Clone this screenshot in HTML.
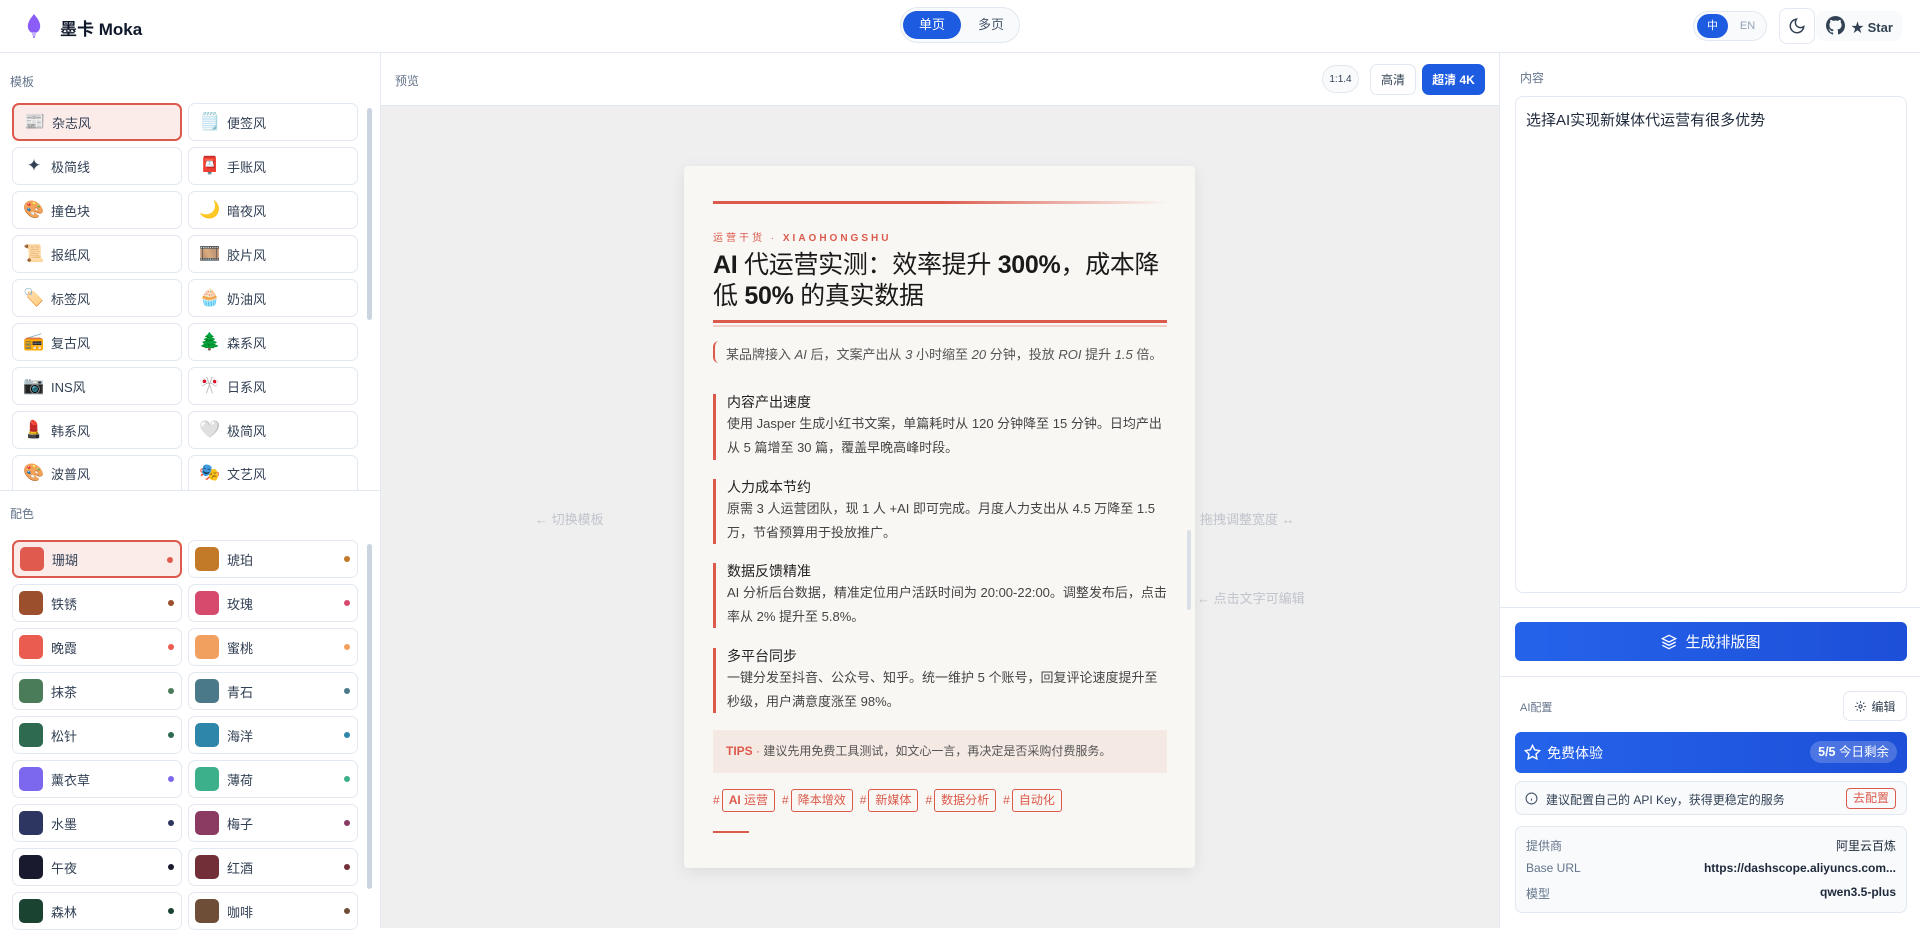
<!DOCTYPE html>
<html><head><meta charset="utf-8"><style>
*{box-sizing:border-box;margin:0;padding:0}
body{width:1920px;height:928px;overflow:hidden;font-family:"Liberation Sans","Noto Sans CJK SC",sans-serif;background:#fff;color:#1e293b;position:relative}
.abs{position:absolute}
.hdr{left:0;top:0;width:1920px;height:53px;border-bottom:1px solid #e2e8f0;background:#fff}
.left{left:0;top:53px;width:381px;height:875px;border-right:1px solid #e2e8f0;background:#fff}
.lbl{font-size:12px;color:#64748b}
.item{position:absolute;width:170px;height:38px;border:1px solid #e2e8f0;border-radius:7px;background:#fff;font-size:13px;color:#334155;display:flex;align-items:center}
.item.sel{border:2px solid #dc5a4c;background:#fbecea}
.item .ic{width:34px;text-align:center;font-size:17px;margin-left:4px}
.sw{width:24px;height:24px;border-radius:5px;margin:0 8px 0 6px}
.dot{position:absolute;right:7px;top:15px;width:6px;height:6px;border-radius:50%}
.sb{position:absolute;width:5px;border-radius:3px;background:#cbd5e1}
.prev{left:381px;top:53px;width:1118px;height:875px;background:#efefef}
.tb{left:0;top:0;width:1118px;height:53px;background:#fff;border-bottom:1px solid #e2e8f0}
.btn{position:absolute;border:1px solid #e2e8f0;border-radius:7px;font-size:12px;display:flex;align-items:center;justify-content:center;background:#fff;color:#334155}
.card{left:303px;top:113px;width:511px;height:702px;background:#f9f7f3;border-radius:4px;box-shadow:0 4px 16px rgba(0,0,0,.08)}
.sec{position:absolute;left:29px;width:454px;border-left:3px solid #dc5a4c;padding-left:11px}
.sec h4{font-weight:normal;font-size:14px;color:#222;line-height:20px;margin-top:-2px}
.sec p{font-size:13px;color:#444;line-height:24px}
.tag{display:inline-block;border:1px solid #dc5a4c;border-radius:3px;color:#dc5a4c;font-size:12px;padding:0 6px;height:23px;line-height:21px;margin-left:2px}
.hash{color:#dc5a4c;font-size:12px;margin-left:7px}
.right{left:1499px;top:53px;width:421px;height:875px;background:#fff;border-left:1px solid #e2e8f0}
</style></head><body>
<div class="abs hdr">
 <svg class="abs" style="left:24px;top:13px" width="20" height="26" viewBox="0 0 20 26"><path d="M10 1 C14 6 17 10 16 15 C15 19 12 20 10 20 C8 20 5 19 4 15 C3 10 6 6 10 1Z" fill="#8b5cf6"/><path d="M10 20 L10 25" stroke="#a78bfa" stroke-width="2"/><circle cx="10" cy="21" r="2" fill="#c4b5fd"/></svg>
 <div class="abs" style="left:60px;top:15px;font-size:17px;font-weight:bold;color:#0f172a">墨卡 Moka</div>
 <div class="abs" style="left:900px;top:7px;width:120px;height:36px;border:1px solid #e2e8f0;border-radius:18px;background:#f8fafc"></div>
 <div class="abs" style="left:903px;top:11px;width:58px;height:28px;border-radius:14px;background:#1d5be0;color:#fff;font-size:13px;text-align:center;line-height:28px">单页</div>
 <div class="abs" style="left:966px;top:11px;width:50px;height:28px;color:#475569;font-size:13px;text-align:center;line-height:28px">多页</div>
 <div class="abs" style="left:1693px;top:11px;width:74px;height:30px;border:1px solid #e2e8f0;border-radius:15px;background:#f8fafc"></div>
 <div class="abs" style="left:1697px;top:14px;width:31px;height:24px;border-radius:12px;background:#1d5be0;color:#fff;font-size:11px;text-align:center;line-height:24px">中</div>
 <div class="abs" style="left:1732px;top:14px;width:31px;height:24px;color:#94a3b8;font-size:11px;text-align:center;line-height:24px">EN</div>
 <div class="abs" style="left:1779px;top:8px;width:36px;height:36px;border:1px solid #e2e8f0;border-radius:8px"></div>
 <svg class="abs" style="left:1788px;top:17px" width="18" height="18" viewBox="0 0 24 24" fill="none" stroke="#334155" stroke-width="2"><path d="M21 12.8A9 9 0 1 1 11.2 3a7 7 0 0 0 9.8 9.8z"/></svg>
 <div class="abs" style="left:1816px;top:11px;width:86px;height:30px;border-radius:8px;background:#f8fafc"></div>
 <svg class="abs" style="left:1826px;top:16px" width="19" height="19" viewBox="0 0 16 16"><path fill="#334155" d="M8 0C3.6 0 0 3.6 0 8c0 3.5 2.3 6.5 5.5 7.6.4.1.5-.2.5-.4v-1.4c-2.2.5-2.7-1-2.7-1-.4-.9-.9-1.2-.9-1.2-.7-.5.1-.5.1-.5.8.1 1.2.8 1.2.8.7 1.2 1.9.9 2.3.7.1-.5.3-.9.5-1.1-1.8-.2-3.6-.9-3.6-4 0-.9.3-1.6.8-2.1-.1-.2-.4-1 .1-2.1 0 0 .7-.2 2.2.8.6-.2 1.3-.3 2-.3s1.4.1 2 .3c1.5-1 2.2-.8 2.2-.8.4 1.1.2 1.9.1 2.1.5.6.8 1.3.8 2.1 0 3.1-1.9 3.7-3.6 3.9.3.3.6.8.6 1.5v2.2c0 .2.1.5.6.4C13.7 14.5 16 11.5 16 8c0-4.4-3.6-8-8-8z"/></svg>
 <div class="abs" style="left:1851px;top:17px;font-size:13px;font-weight:bold;color:#334155">★ Star</div>
</div>

<div class="abs left">
 <div class="abs lbl" style="left:10px;top:20px">模板</div>
 <div class="abs" style="left:0;top:437px;width:381px;height:1px;background:#e2e8f0"></div>
 <div class="abs lbl" style="left:10px;top:452px">配色</div>
 <div class="sb" style="left:367px;top:55px;height:212px"></div>
 <div class="sb" style="left:367px;top:491px;height:345px"></div>
 <div id="tpl"></div><div id="col"></div>
</div>

<div class="abs prev">
 <div class="abs tb">
  <div class="abs lbl" style="left:14px;top:19px">预览</div>
  <div class="btn" style="left:941px;top:12px;width:37px;height:28px;border-radius:14px;font-size:10px;background:#f8fafc">1:1.4</div>
  <div class="btn" style="left:989px;top:11px;width:46px;height:31px">高清</div>
  <div class="btn" style="left:1041px;top:11px;width:63px;height:31px;background:#1d5be0;color:#fff;border-color:#1d5be0;font-weight:bold">超清 4K</div>
 </div>
 <div class="abs" style="left:154px;top:456px;font-size:13px;color:#c0c4cc">← 切换模板</div>
 <div class="abs" style="left:819px;top:456px;font-size:13px;color:#c0c4cc">拖拽调整宽度 ↔</div>
 <div class="abs" style="left:816px;top:535px;font-size:13px;color:#c0c4cc">← 点击文字可编辑</div>
 <div class="abs card">
  <div class="abs" style="left:29px;top:35px;width:454px;height:3px;background:linear-gradient(90deg,#dc5a4c 50%,rgba(220,90,76,0))"></div>
  <div class="abs" style="left:29px;top:63px;font-size:10px;letter-spacing:3px;color:#dc5a4c">运营干货 · <b>XIAOHONGSHU</b></div>
  <div class="abs" style="left:29px;top:84px;width:470px;font-size:25px;letter-spacing:-0.3px;line-height:31px;color:#1a1a1a"><b>AI</b> 代运营实测：效率提升 <b>300%</b>，成本降低 <b>50%</b> 的真实数据</div>
  <div class="abs" style="left:29px;top:154px;width:454px;height:3px;background:#dc5a4c"></div>
  <div class="abs" style="left:29px;top:159px;width:454px;height:2px;background:#f1cfc9"></div>
  <div class="abs" style="left:29px;top:175px;width:6px;height:22px;border-left:2px solid #dc5a4c;border-radius:6px 0 0 6px"></div>
  <div class="abs" style="left:42px;top:178px;font-size:13px;color:#555;white-space:nowrap">某品牌接入 <i>AI</i> 后，文案产出从 <i>3</i> 小时缩至 <i>20</i> 分钟，投放 <i>ROI</i> 提升 <i>1.5</i> 倍。</div>
  <div class="sec" style="top:228px;height:66px"><h4>内容产出速度</h4><p>使用 Jasper 生成小红书文案，单篇耗时从 120 分钟降至 15 分钟。日均产出从 5 篇增至 30 篇，覆盖早晚高峰时段。</p></div>
  <div class="sec" style="top:313px;height:65px"><h4>人力成本节约</h4><p>原需 3 人运营团队，现 1 人 +AI 即可完成。月度人力支出从 4.5 万降至 1.5 万，节省预算用于投放推广。</p></div>
  <div class="sec" style="top:397px;height:65px"><h4>数据反馈精准</h4><p>AI 分析后台数据，精准定位用户活跃时间为 20:00-22:00。调整发布后，点击率从 2% 提升至 5.8%。</p></div>
  <div class="sec" style="top:482px;height:65px"><h4>多平台同步</h4><p>一键分发至抖音、公众号、知乎。统一维护 5 个账号，回复评论速度提升至秒级，用户满意度涨至 98%。</p></div>
  <div class="abs" style="left:29px;top:564px;width:454px;height:43px;background:#f5e9e4;font-size:12px;color:#555;line-height:43px;padding-left:13px"><b style="color:#dc5a4c">TIPS</b><span style="color:#dc5a4c"> · </span>建议先用免费工具测试，如文心一言，再决定是否采购付费服务。</div>
  <div class="abs" style="left:22px;top:623px;white-space:nowrap"><span class="hash">#</span><span class="tag"><b>AI</b> 运营</span><span class="hash">#</span><span class="tag">降本增效</span><span class="hash">#</span><span class="tag">新媒体</span><span class="hash">#</span><span class="tag">数据分析</span><span class="hash">#</span><span class="tag">自动化</span></div>
  <div class="abs" style="left:29px;top:665px;width:36px;height:2px;background:#dc5a4c"></div>
  <div class="abs" style="left:503px;top:364px;width:4px;height:80px;border-radius:2px;background:#dbe0e8"></div>
 </div>
</div>

<div class="abs right">
 <div class="abs lbl" style="left:20px;top:16px">内容</div>
 <div class="abs" style="left:15px;top:43px;width:392px;height:497px;border:1px solid #e2e8f0;border-radius:8px;padding:12px 10px;font-size:15px;color:#1e293b">选择AI实现新媒体代运营有很多优势</div>
 <div class="abs" style="left:0;top:554px;width:421px;height:1px;background:#e2e8f0"></div>
 <div class="abs" style="left:15px;top:569px;width:392px;height:39px;border-radius:6px;background:linear-gradient(90deg,#2563eb,#1d4fd8);color:#fff;font-size:15px;display:flex;align-items:center;justify-content:center;gap:8px"><svg width="16" height="16" viewBox="0 0 24 24" fill="none" stroke="#fff" stroke-width="2"><path d="M12 2 2 7l10 5 10-5-10-5z M2 12l10 5 10-5 M2 17l10 5 10-5"/></svg>生成排版图</div>
 <div class="abs" style="left:0;top:623px;width:421px;height:1px;background:#e2e8f0"></div>
 <div class="abs lbl" style="left:20px;top:646px;font-size:11px">AI配置</div>
 <div class="abs" style="left:343px;top:638px;width:64px;height:30px;border:1px solid #e2e8f0;border-radius:7px;font-size:12px;color:#334155;display:flex;align-items:center;justify-content:center;gap:4px"><svg width="13" height="13" viewBox="0 0 24 24" fill="none" stroke="#334155" stroke-width="2"><circle cx="12" cy="12" r="3"/><path d="M12 2v3M12 19v3M2 12h3M19 12h3M4.9 4.9l2.1 2.1M17 17l2.1 2.1M4.9 19.1 7 17M17 7l2.1-2.1"/></svg>编辑</div>
 <div class="abs" style="left:15px;top:679px;width:392px;height:41px;border-radius:6px;background:linear-gradient(90deg,#2563eb,#1d4fd8);color:#fff;font-size:14px">
  <svg class="abs" style="left:9px;top:12px" width="17" height="17" viewBox="0 0 24 24" fill="none" stroke="#fff" stroke-width="2"><path d="M12 2l3.1 6.3 6.9 1-5 4.9 1.2 6.8L12 17.8 5.8 21l1.2-6.8-5-4.9 6.9-1z"/></svg>
  <div class="abs" style="left:32px;top:11px">免费体验</div>
  <div class="abs" style="right:10px;top:9px;height:22px;padding:0 8px;border-radius:11px;background:rgba(255,255,255,.2);font-size:12.5px;line-height:22px"><b>5/5</b> 今日剩余</div>
 </div>
 <div class="abs" style="left:15px;top:728px;width:392px;height:34px;border:1px solid #e2e8f0;border-radius:7px;background:#f8fafc;font-size:12px;color:#334155">
  <svg class="abs" style="left:9px;top:10px" width="13" height="13" viewBox="0 0 24 24" fill="none" stroke="#475569" stroke-width="2"><circle cx="12" cy="12" r="10"/><path d="M12 16v-4M12 8h0"/></svg>
  <div class="abs" style="left:30px;top:9px">建议配置自己的 API Key，获得更稳定的服务</div>
  <div class="abs" style="right:10px;top:6px;width:50px;height:21px;border:1px solid #dc5a4c;border-radius:4px;color:#dc5a4c;text-align:center;line-height:19px">去配置</div>
 </div>
 <div class="abs" style="left:15px;top:773px;width:392px;height:87px;border:1px solid #e2e8f0;border-radius:7px;background:#f8fafc;font-size:12px">
  <div class="abs" style="left:10px;top:10px;color:#64748b">提供商</div><div class="abs" style="right:10px;top:10px;color:#1e293b">阿里云百炼</div>
  <div class="abs" style="left:10px;top:34px;color:#64748b">Base URL</div><div class="abs" style="right:10px;top:34px;color:#1e293b;font-weight:bold">https://dashscope.aliyuncs.com...</div>
  <div class="abs" style="left:10px;top:58px;color:#64748b">模型</div><div class="abs" style="right:10px;top:58px;color:#1e293b;font-weight:bold">qwen3.5-plus</div>
 </div>
</div>

<script>
var t=[["📰","杂志风"],["🗒️","便签风"],["✦","极简线"],["📮","手账风"],["🎨","撞色块"],["🌙","暗夜风"],["📜","报纸风"],["🎞️","胶片风"],["🏷️","标签风"],["🧁","奶油风"],["📻","复古风"],["🌲","森系风"],["📷","INS风"],["🎌","日系风"],["💄","韩系风"],["🤍","极简风"],["🎨","波普风"],["🎭","文艺风"]];
var h="";
t.forEach(function(e,i){var x=i%2?188:12,y=50+Math.floor(i/2)*44;h+='<div class="item'+(i==0?' sel':'')+'" style="left:'+x+'px;top:'+y+'px;'+(y+38>437?'height:'+(437-y)+'px;overflow:hidden;border-bottom:none;border-radius:7px 7px 0 0':'')+'"><span class="ic">'+e[0]+'</span>'+e[1]+'</div>';});
document.getElementById("tpl").innerHTML=h;
var c=[["#e05a4e","珊瑚"],["#c27a28","琥珀"],["#9c4f2c","铁锈"],["#d64a6e","玫瑰"],["#ea5c4f","晚霞"],["#f2a060","蜜桃"],["#4a7c59","抹茶"],["#4a7a8a","青石"],["#2d6a4f","松针"],["#2e86ab","海洋"],["#7b68ee","薰衣草"],["#3cb08a","薄荷"],["#2d3561","水墨"],["#8b3a62","梅子"],["#1a1a2e","午夜"],["#722f37","红酒"],["#1b4332","森林"],["#6f4e37","咖啡"]];
h="";
c.forEach(function(e,i){var x=i%2?188:12,y=487+Math.floor(i/2)*44;h+='<div class="item'+(i==0?' sel':'')+'" style="left:'+x+'px;top:'+y+'px"><span class="sw" style="background:'+e[0]+'"></span>'+e[1]+'<span class="dot" style="background:'+e[0]+'"></span></div>';});
document.getElementById("col").innerHTML=h;
</script>
</body></html>
